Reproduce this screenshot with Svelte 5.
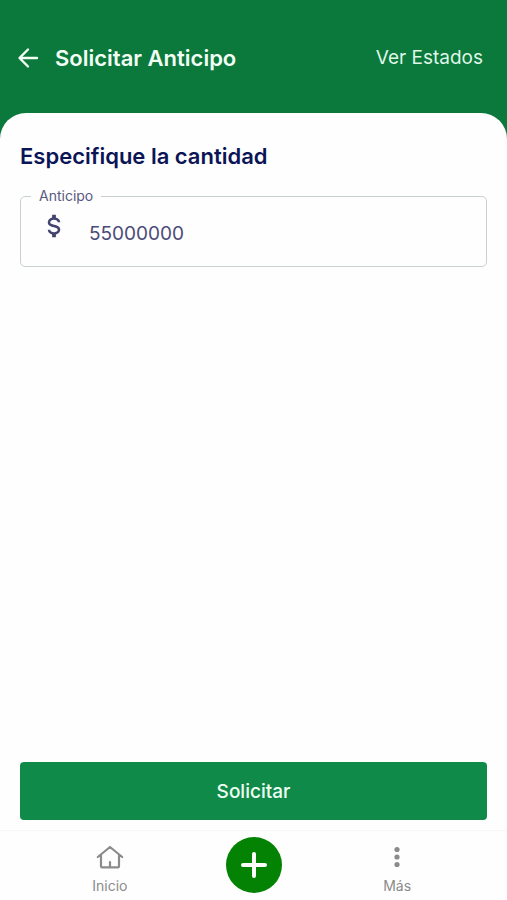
<script>
  let amount = $state('55000000');
</script>

<svelte:head>
  <title>Solicitar Anticipo</title>
</svelte:head>

<div class="screen">
  <header class="topbar">
    <button type="button" class="back" aria-label="Volver">
      <svg viewBox="0 0 24 24" width="24" height="24">
        <path d="M21 12H4M12 3.500 3.500 12l8.500 8.500" />
      </svg>
    </button>
    <h1>Solicitar Anticipo</h1>
    <a href="#estados" class="states-link">Ver Estados</a>
  </header>

  <main class="sheet">
    <form class="request" onsubmit={(e) => e.preventDefault()}>
      <h2>Especifique la cantidad</h2>

      <fieldset class="field">
        <legend><label for="amount">Anticipo</label></legend>
        <div class="field-row">
          <svg class="currency" viewBox="0 0 24 24" width="30" height="30" aria-hidden="true">
            <path d="M7,15H9C9,16.08 10.37,17 12,17C13.63,17 15,16.08 15,15C15,13.9 13.96,13.5 11.76,12.97C9.64,12.44 7,11.78 7,9C7,7.21 8.47,5.69 10.5,5.18V3H13.5V5.18C15.53,5.69 17,7.21 17,9H15C15,7.92 13.63,7 12,7C10.37,7 9,7.92 9,9C9,10.1 10.04,10.5 12.24,11.03C14.36,11.56 17,12.22 17,15C17,16.79 15.53,18.31 13.5,18.82V21H10.5V18.82C8.47,18.31 7,16.79 7,15Z" />
          </svg>
          <input id="amount" type="text" inputmode="numeric" bind:value={amount} />
        </div>
      </fieldset>

      <button type="submit" class="submit">Solicitar</button>
    </form>

    <nav class="tabs">
      <a href="#inicio" class="tab">
        <svg viewBox="0 0 28 28" width="28" height="28" fill="none" stroke="currentColor" stroke-width="2.2" stroke-linecap="round" stroke-linejoin="round">
          <path d="M1.800 14 14 4l12.200 10M5 11.800V23.200q0 1.200 1.200 1.200h15.600q1.200 0 1.200-1.200V11.800M14 24v-5" />
        </svg>
        <span>Inicio</span>
      </a>
      <div class="tab">
        <button type="button" class="add" aria-label="Agregar">
          <svg viewBox="0 0 28 28" width="28" height="28">
            <path d="M14 3v22M3 14h22" />
          </svg>
        </button>
      </div>
      <a href="#mas" class="tab">
        <svg viewBox="0 0 28 28" width="28" height="28" fill="currentColor">
          <circle cx="14" cy="6.500" r="2.600" />
          <circle cx="14" cy="14" r="2.600" />
          <circle cx="14" cy="21.500" r="2.600" />
        </svg>
        <span>Más</span>
      </a>
    </nav>
  </main>
</div>

<style>
  :global(body) { margin: 0; }
  .screen {
    min-height: 100vh;
    display: flex;
    flex-direction: column;
    background: #0b783c;
    font-family: Inter, 'Liberation Sans', sans-serif;
  }
  .topbar {
    display: flex;
    align-items: center;
    gap: 15px;
    padding: 41px 24px 39px 16px;
    min-height: 33px;
    color: #f1fff5;
  }
  .back {
    display: flex;
    padding: 0;
    border: 0;
    background: none;
    color: inherit;
    cursor: pointer;
  }
  .back path {
    fill: none;
    stroke: currentColor;
    stroke-width: 2.4;
    stroke-linecap: round;
    stroke-linejoin: round;
  }
  h1 {
    flex: 1;
    margin: 0;
    font-size: 22px;
    line-height: 30px;
    font-weight: 600;
  }
  .states-link {
    color: #dff7e6;
    font-size: 19px;
    text-decoration: none;
  }
  .sheet {
    flex: 1;
    display: flex;
    flex-direction: column;
    background: #fefefe;
    border-radius: 26px 26px 0 0;
  }
  .request {
    flex: 1;
    display: flex;
    flex-direction: column;
    padding: 28px 20px 10px;
  }
  h2 {
    margin: 0 0 16px;
    color: #0b1556;
    font-size: 22px;
    line-height: 30px;
    font-weight: 600;
  }
  .field {
    min-width: 0;
    margin: 0;
    padding: 0 18px;
    border: 1px solid #c8d0d0;
    border-radius: 5px;
  }
  legend {
    margin-left: -8px;
    padding: 0 8px;
    color: #5a5a80;
    font-size: 14px;
    line-height: 18px;
  }
  .field-row {
    display: flex;
    align-items: flex-start;
    gap: 20px;
    height: 61px;
  }
  .currency {
    flex: none;
    fill: #43436f;
    margin-top: 6px;
  }
  input {
    flex: 1;
    min-width: 0;
    height: 50px;
    padding: 6px 0 0;
    border: 0;
    outline: 0;
    background: none;
    box-sizing: border-box;
    color: #4b4b78;
    font: inherit;
    font-size: 19px;
  }
  .submit {
    margin-top: auto;
    height: 58px;
    border: 0;
    border-radius: 4px;
    background: #108a49;
    color: #effff4;
    font: inherit;
    font-size: 19px;
    font-weight: 500;
    cursor: pointer;
  }
  .tabs {
    display: flex;
    padding: 6px 38px 5px;
    border-top: 1px solid #f7f7f7;
  }
  .tab {
    flex: 1;
    display: flex;
    flex-direction: column;
    align-items: center;
    padding-top: 6px;
    color: #8b8b8b;
    font-size: 14px;
    line-height: 18px;
    text-decoration: none;
  }
  .tab span { margin-top: 6px; }
  div.tab { padding-top: 0; }
  .add {
    display: flex;
    align-items: center;
    justify-content: center;
    width: 56px;
    height: 56px;
    padding: 0;
    border: 0;
    border-radius: 50%;
    background: #048204;
    cursor: pointer;
  }
  .add path {
    stroke: #fff;
    stroke-width: 4;
    stroke-linecap: round;
  }
</style>
